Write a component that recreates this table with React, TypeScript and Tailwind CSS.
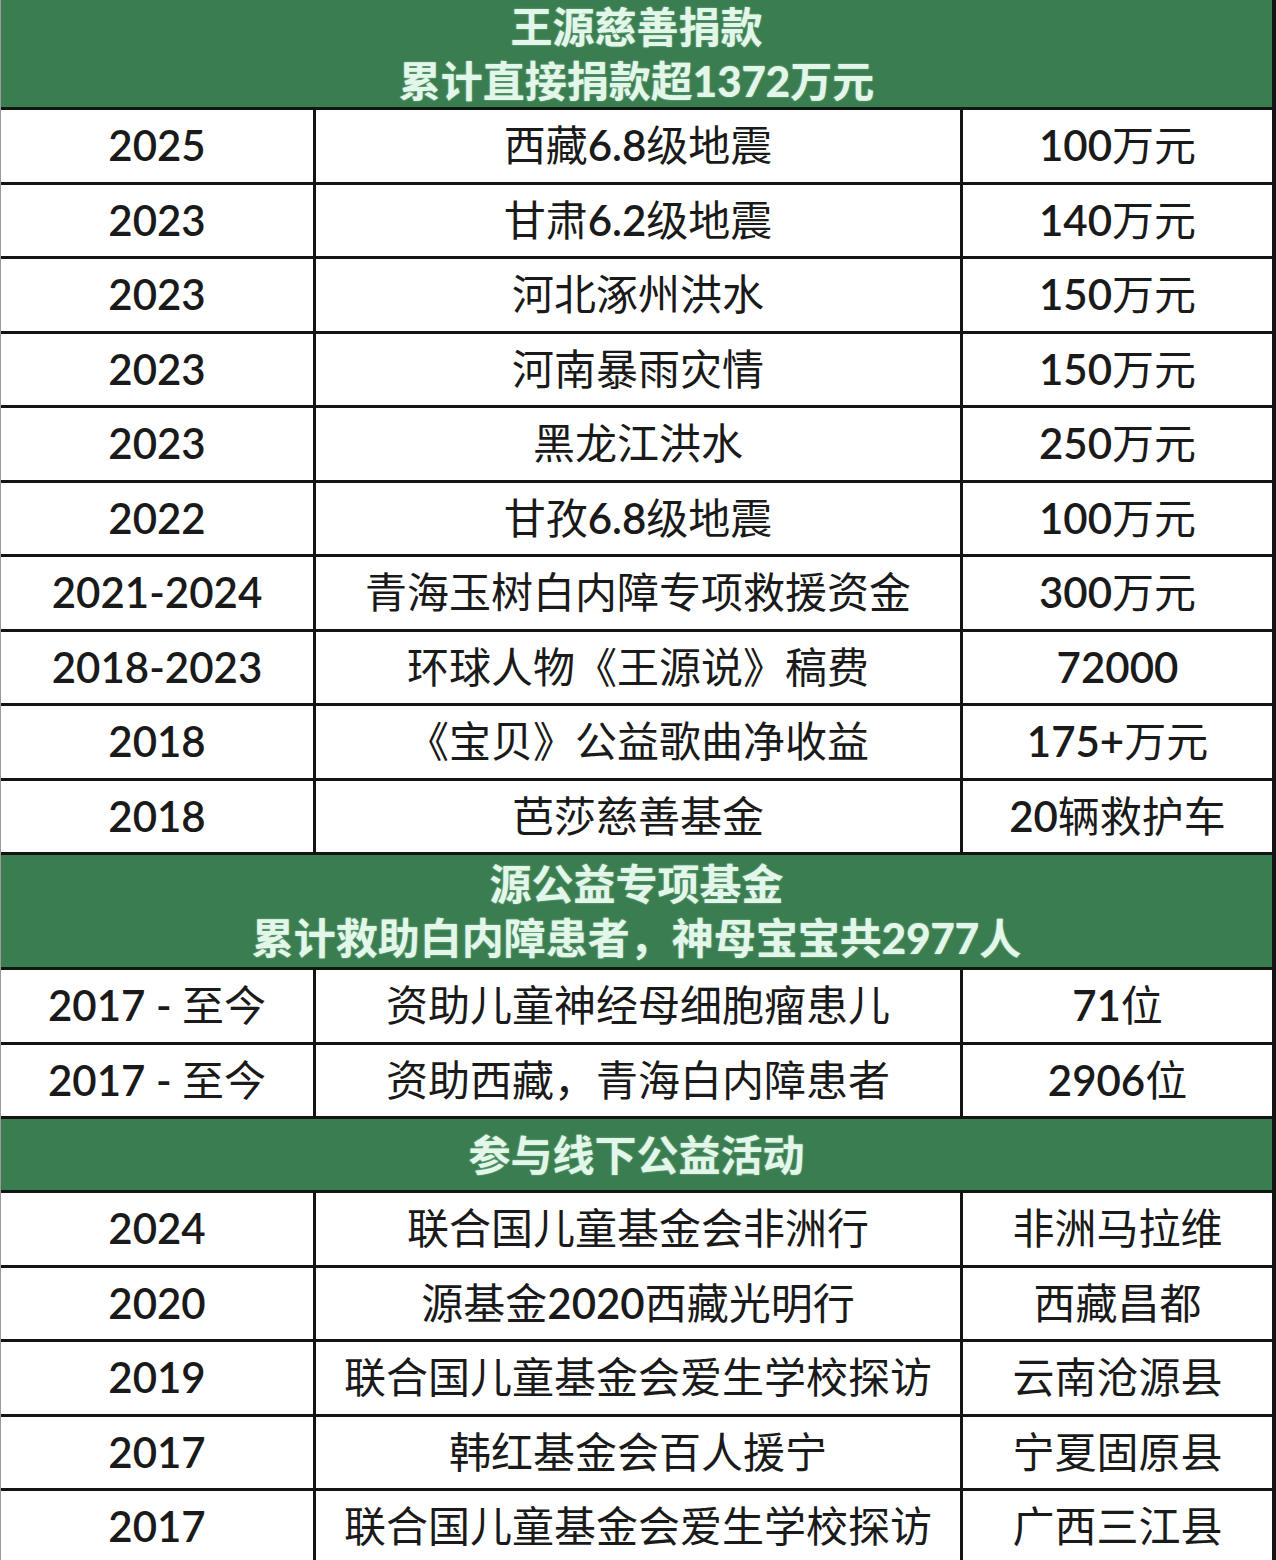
import React from "react";

type Row = [string, string, string];

const sec1: Row[] = [
  ["2025", "西藏6.8级地震", "100万元"],
  ["2023", "甘肃6.2级地震", "140万元"],
  ["2023", "河北涿州洪水", "150万元"],
  ["2023", "河南暴雨灾情", "150万元"],
  ["2023", "黑龙江洪水", "250万元"],
  ["2022", "甘孜6.8级地震", "100万元"],
  ["2021-2024", "青海玉树白内障专项救援资金", "300万元"],
  ["2018-2023", "环球人物《王源说》稿费", "72000"],
  ["2018", "《宝贝》公益歌曲净收益", "175+万元"],
  ["2018", "芭莎慈善基金", "20辆救护车"],
];

const sec2: Row[] = [
  ["2017 - 至今", "资助儿童神经母细胞瘤患儿", "71位"],
  ["2017 - 至今", "资助西藏，青海白内障患者", "2906位"],
];

const sec3: Row[] = [
  ["2024", "联合国儿童基金会非洲行", "非洲马拉维"],
  ["2020", "源基金2020西藏光明行", "西藏昌都"],
  ["2019", "联合国儿童基金会爱生学校探访", "云南沧源县"],
  ["2017", "韩红基金会百人援宁", "宁夏固原县"],
  ["2017", "联合国儿童基金会爱生学校探访", "广西三江县"],
];

function Mixed({ text, digitCls, cjkCls }: { text: string; digitCls: string; cjkCls: string }) {
  const parts = text.split(/([0-9.+\- ]+)/).filter((p) => p.length > 0);
  return (
    <span className="whitespace-pre">
      {parts.map((p, i) =>
        /^[0-9.+\- ]+$/.test(p) ? (
          <span key={i} className={digitCls}>
            {p}
          </span>
        ) : (
          <span key={i} className={cjkCls}>
            {p}
          </span>
        )
      )}
    </span>
  );
}

function Header({ lines, h }: { lines: string[]; h: string }) {
  return (
    <div
      className={`${h} bg-[#3a7d50] border-b-[3px] border-[#101810] flex flex-col items-center justify-center text-[#e2f7e9] text-[42px] leading-[54px] font-['Lato','Noto_Sans_CJK_SC',sans-serif] [text-shadow:0_0_2px_rgba(220,255,230,0.5)]`}
    >
      {lines.map((l, i) => (
        <div key={i}>
          <Mixed text={l} digitCls="font-black" cjkCls="font-bold" />
        </div>
      ))}
    </div>
  );
}

function Rows({ rows }: { rows: Row[] }) {
  return (
    <>
      {rows.map((r, i) => (
        <div
          key={i}
          className="grid grid-cols-[315px_647px_1fr] h-[74.5px] border-b-[3px] border-[#141414] text-[#1a1a1a] text-[42px] font-['Lato','Noto_Sans_CJK_SC',sans-serif]"
        >
          <div className="border-r-[3px] border-[#141414] flex items-center justify-center">
            <Mixed text={r[0]} digitCls="font-semibold" cjkCls="font-normal" />
          </div>
          <div className="border-r-[3px] border-[#141414] flex items-center justify-center">
            <Mixed text={r[1]} digitCls="font-semibold" cjkCls="font-normal" />
          </div>
          <div className="flex items-center justify-center">
            <Mixed text={r[2]} digitCls="font-semibold" cjkCls="font-normal" />
          </div>
        </div>
      ))}
    </>
  );
}

export default function App() {
  return (
    <div className="w-[1276px] h-[1560px] overflow-hidden bg-white">
      <div className="w-[1276px] border-l border-[#9a9a9a] border-r-[4px] border-r-[#141414] bg-white">
        <Header h="h-[110px]" lines={["王源慈善捐款", "累计直接捐款超1372万元"]} />
        <Rows rows={sec1} />
        <Header h="h-[115px]" lines={["源公益专项基金", "累计救助白内障患者，神母宝宝共2977人"]} />
        <Rows rows={sec2} />
        <Header h="h-[74px]" lines={["参与线下公益活动"]} />
        <Rows rows={sec3} />
      </div>
    </div>
  );
}
